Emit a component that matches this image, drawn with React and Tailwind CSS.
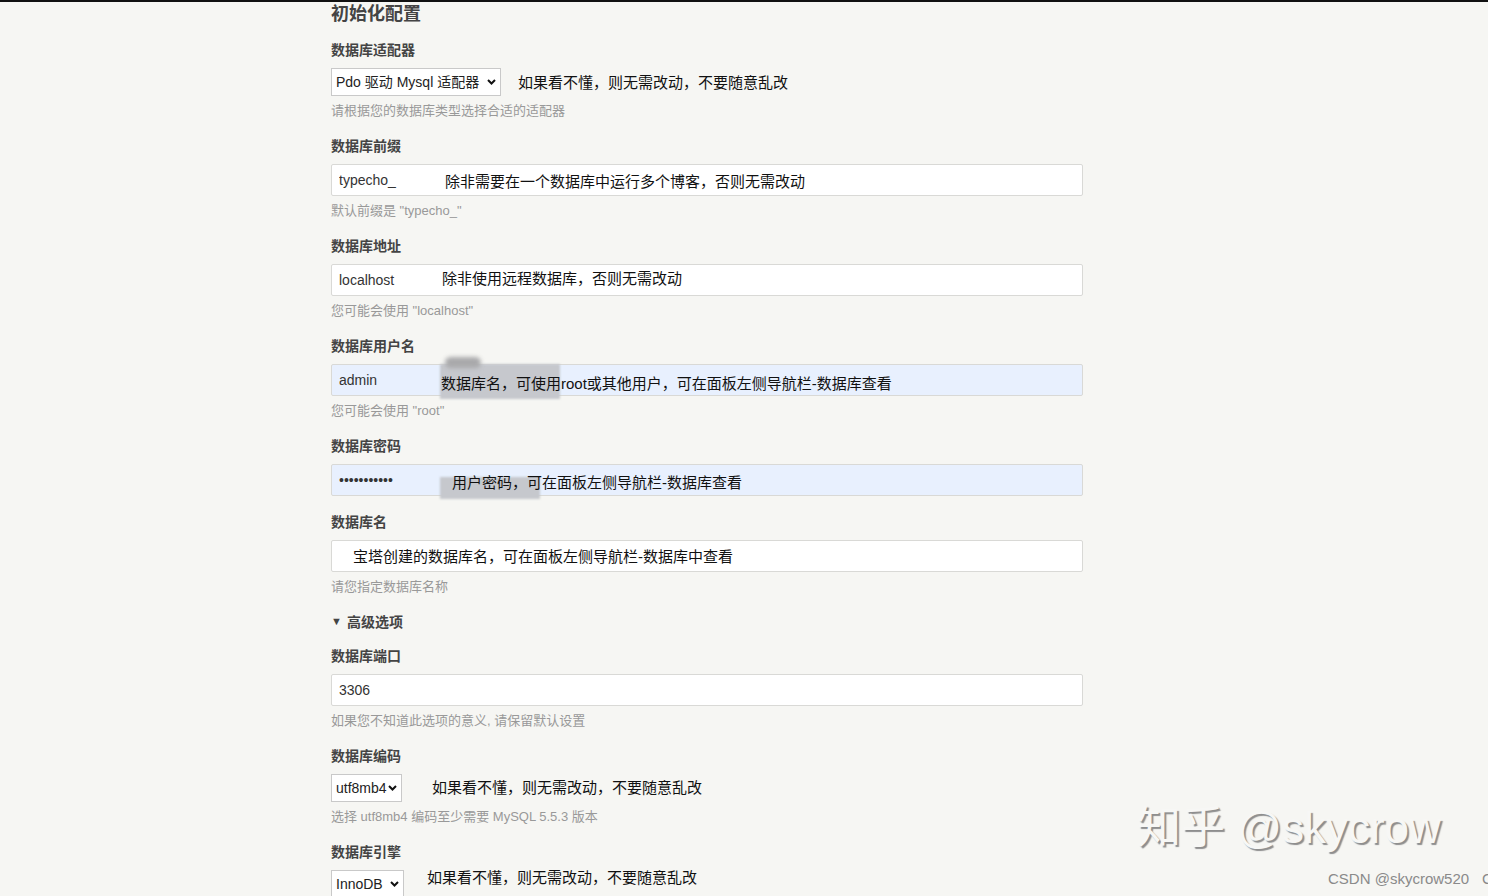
import React from "react";

// 安装向导 —— 数据库初始化配置表单
const FONT = { fontFamily: '"Liberation Sans", "Noto Sans CJK SC", sans-serif' };

const Field = ({ label, desc, children, className = "mb-4" }) => (
  <div className={className}>
    <label className="block h-5 text-sm leading-5 font-bold text-[#444]">{label}</label>
    <div className="mt-2">{children}</div>
    {desc && <p className="mt-1.5 text-[13px] leading-[18px] text-[#999]">{desc}</p>}
  </div>
);

const Select = ({ value, width }) => (
  <div className={`relative inline-block ${width}`}>
    <select
      defaultValue={value}
      className="h-7 w-full appearance-none rounded-none border border-[#c9c9c9] bg-white pl-1 pr-[13px] text-sm text-[#222] outline-none"
    >
      <option>{value}</option>
    </select>
    <svg
      className="pointer-events-none absolute right-[5px] top-[11px] h-[6px] w-[9px]"
      viewBox="0 0 9 6"
      fill="none"
    >
      <path d="M1 1l3.5 3.5L8 1" stroke="#111" strokeWidth="2" />
    </svg>
  </div>
);

const Note = ({ children, className = "" }) => (
  <span className={`text-[15px] leading-5 whitespace-nowrap text-[#111] ${className}`}>{children}</span>
);

// 输入框，note 为叠加在输入框上的说明文字
const TextInput = ({ value, type = "text", autofill, note, noteLeft, noteTop, children }) => (
  <div className="relative">
    <input
      type={type}
      defaultValue={value}
      readOnly
      className={`h-8 w-full rounded-[2px] border border-[#d9d9d6] pl-[7px] pr-2 text-sm text-[#333] outline-none ${
        autofill ? "bg-[#e8f0fe]" : "bg-white"
      }`}
    />
    {children}
    {note && (
      <span
        className="absolute text-[15px] leading-5 whitespace-nowrap text-[#111]"
        style={{ left: noteLeft, top: noteTop }}
      >
        {note}
      </span>
    )}
  </div>
);

export default function App() {
  return (
    <div className="relative h-[896px] overflow-hidden bg-[#f6f6f3]" style={FONT}>
      <div className="h-[2px] bg-[#111]" />

      <div className="ml-[331px] w-[752px]">
        <h2 className="mb-3.5 h-6 text-lg leading-6 font-bold text-[#444]">初始化配置</h2>

        <Field label="数据库适配器" desc="请根据您的数据库类型选择合适的适配器">
          <div className="flex items-center">
            <Select value="Pdo 驱动 Mysql 适配器" width="w-[170px]" />
            <Note className="ml-[17px] mt-[2px]">如果看不懂，则无需改动，不要随意乱改</Note>
          </div>
        </Field>

        <Field label="数据库前缀" desc={'默认前缀是 "typecho_"'}>
          <TextInput value="typecho_" note="除非需要在一个数据库中运行多个博客，否则无需改动" noteLeft={114} noteTop={8} />
        </Field>

        <Field label="数据库地址" desc={'您可能会使用 "localhost"'}>
          <TextInput value="localhost" note="除非使用远程数据库，否则无需改动" noteLeft={111} noteTop={5} />
        </Field>

        <Field label="数据库用户名" desc={'您可能会使用 "root"'}>
          <TextInput value="admin" autofill>
            <div className="absolute left-[109px] top-0 h-[35px] w-[120px] bg-[#c6c8cd] blur-[1px]" />
            <div className="absolute left-[114px] top-[-7px] h-[11px] w-[36px] rounded-full bg-[#a9a9ab] blur-[2px]" />
            <span className="absolute left-[110px] top-[10px] text-[15px] leading-5 whitespace-nowrap text-[#111]">
              数据库名，可使用root或其他用户，可在面板左侧导航栏-数据库查看
            </span>
          </TextInput>
        </Field>

        <Field label="数据库密码">
          <TextInput value="xxxxxxxxxxx" type="password" autofill>
            <div className="absolute left-[109px] top-[13px] h-[22px] w-[100px] bg-[#c6c8cd] blur-[1px]" />
            <span className="absolute left-[121px] top-[9px] text-[15px] leading-5 whitespace-nowrap text-[#111]">
              用户密码，可在面板左侧导航栏-数据库查看
            </span>
          </TextInput>
        </Field>

        <Field label="数据库名" desc="请您指定数据库名称">
          <TextInput value="" note="宝塔创建的数据库名，可在面板左侧导航栏-数据库中查看" noteLeft={22} noteTop={7} />
        </Field>

        <div className="mb-3.5 flex h-5 items-center text-sm font-bold text-[#444]">
          <span className="mr-[5px] text-[11px]">▼</span>
          高级选项
        </div>

        <Field label="数据库端口" desc="如果您不知道此选项的意义, 请保留默认设置">
          <TextInput value="3306" />
        </Field>

        <Field label="数据库编码" desc="选择 utf8mb4 编码至少需要 MySQL 5.5.3 版本">
          <div className="flex items-center">
            <Select value="utf8mb4" width="w-[71px]" />
            <Note className="ml-[30px]">如果看不懂，则无需改动，不要随意乱改</Note>
          </div>
        </Field>

        <Field label="数据库引擎">
          <div className="flex items-start">
            <Select value="InnoDB" width="w-[73px]" />
            <Note className="ml-[23px] -mt-[2px]">如果看不懂，则无需改动，不要随意乱改</Note>
          </div>
        </Field>
      </div>

      {/* 水印 */}
      <div className="absolute left-[1137px] top-[806px] text-[44px] leading-none whitespace-nowrap text-[#f7f7f5] [text-shadow:2px_2px_1px_#8e8e8e]">
        知乎 @skycrow
      </div>
      <div className="absolute left-[1328px] top-[869px] text-[15px] leading-5 whitespace-nowrap text-[#8a8a8a]">
        CSDN @skycrow520
      </div>
      <div className="absolute left-[1482px] top-[869px] text-[15px] leading-5 text-[#8a8a8a]">C</div>
    </div>
  );
}
